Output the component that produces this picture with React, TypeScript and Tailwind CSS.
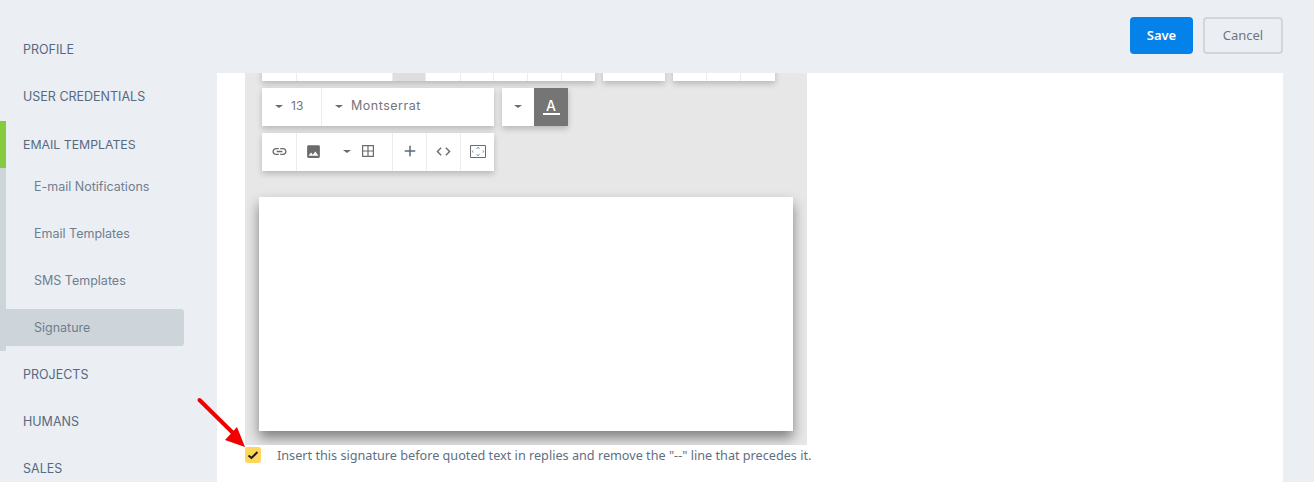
import { MdAdd, MdCode, MdImage, MdLink } from 'react-icons/md';

function Caret() {
  return <span className="inline-block w-0 h-0 border-x-[4px] border-x-transparent border-t-[3px] border-t-[#6b6b6b]" />;
}

function TopLink({ label }: { label: string }) {
  return (
    <div className="h-[47px] flex items-center pl-[23px] pt-[2px] text-[12.5px] text-[#566a7f] font-['Inter',sans-serif]">
      {label}
    </div>
  );
}

function SubLink({ label, active }: { label: string; active?: boolean }) {
  return (
    <div className="h-[47px] flex items-center">
      <div className={`w-[178px] h-[37px] flex items-center pl-[28px] pt-[2px] text-[12.5px] text-[#6e7f90] font-['Inter',sans-serif] rounded-r-[3px] ${active ? 'bg-[#cdd5da]' : ''}`}>
        {label}
      </div>
    </div>
  );
}

function Cell({ w, children, gray, divider = true }: { w: string; children?: React.ReactNode; gray?: boolean; divider?: boolean }) {
  return (
    <div className={`${w} h-full flex items-center justify-center pb-[2px] ${divider ? 'border-r border-[#ebebf0]' : ''} ${gray ? 'bg-[#dedede]' : ''}`}>
      {children}
    </div>
  );
}

function Group({ children }: { children: React.ReactNode }) {
  return <div className="flex h-[38px] bg-white shadow-[0_3px_6px_rgba(0,0,0,0.2)]">{children}</div>;
}

export default function App() {
  return (
    <div className="relative w-[1314px] h-[482px] overflow-hidden bg-[#ebeef3] flex flex-col">
      <header className="h-[73px] shrink-0 flex items-center justify-end pr-[31px] pb-[2px] gap-[10px] font-['Noto_Sans',sans-serif] text-[13px]">
        <button className="w-[63px] h-[37px] rounded-[4px] bg-[#0581ea] text-white font-semibold">Save</button>
        <button className="w-[80px] h-[37px] rounded-[4px] border-2 border-[#d0d6da] text-[#6b7684]">Cancel</button>
      </header>

      <div className="flex flex-1 min-h-0">
        <nav className="w-[217px] shrink-0 -mt-[47px]">
          <TopLink label="PROFILE" />
          <TopLink label="USER CREDENTIALS" />
          <div className="mt-[1px] border-l-[6px] border-l-[#84cb3f] h-[47px] flex items-center pt-[2px]">
            <div className="pl-[17px] text-[12.3px] text-[#566a7f] font-['Inter',sans-serif]">EMAIL TEMPLATES</div>
          </div>
          <div className="flow-root border-l-[6px] border-l-[#cdd5da] h-[183px]">
            <div className="-mt-[5px]">
              <SubLink label="E-mail Notifications" />
              <SubLink label="Email Templates" />
              <SubLink label="SMS Templates" />
              <SubLink label="Signature" active />
            </div>
          </div>
          <TopLink label="PROJECTS" />
          <TopLink label="HUMANS" />
          <TopLink label="SALES" />
        </nav>

        <main className="w-[1066px] bg-white pl-[28px] overflow-hidden">
          <div className="w-[562px] h-[372px] bg-[#e7e7e7] overflow-hidden">
            <div className="-mt-[30px] pl-[17px] flex flex-col gap-[7px]">
              <div className="flex gap-[8px]">
                <Group>
                  <Cell w="w-[35px]" />
                  <Cell w="w-[96px]" />
                  <Cell w="w-[33px]" gray />
                  <Cell w="w-[35px]" />
                  <Cell w="w-[33px]" />
                  <Cell w="w-[34px]" />
                  <Cell w="w-[34px]" />
                  <Cell w="w-[33px]" divider={false} />
                </Group>
                <Group>
                  <Cell w="w-[62px]" divider={false} />
                </Group>
                <Group>
                  <Cell w="w-[34px]" />
                  <Cell w="w-[34px]" />
                  <Cell w="w-[34px]" divider={false} />
                </Group>
              </div>

              <div className="flex gap-[8px]">
                <Group>
                  <div className="w-[60px] h-full flex items-center pl-[13px] pb-[2px] gap-[8px] border-r border-[#ebebf0] text-[12px] text-[#757575] font-['Inter',sans-serif]">
                    <Caret />
                    13
                  </div>
                  <div className="w-[172px] h-full flex items-center pl-[13px] pb-[2px] gap-[8px] text-[12.5px] tracking-[0.5px] text-[#757575] font-['Inter',sans-serif]">
                    <Caret />
                    Montserrat
                  </div>
                </Group>
                <Group>
                  <Cell w="w-[32px]" divider={false}>
                    <Caret />
                  </Cell>
                  <div className="w-[34px] h-full bg-[#757575] flex flex-col items-center justify-center text-white text-[14px] font-medium font-['Inter',sans-serif] leading-[13px]">
                    A
                    <span className="w-[17px] h-[2px] bg-white mt-[1px]" />
                  </div>
                </Group>
              </div>

              <div className="flex">
                <Group>
                  <Cell w="w-[35px]">
                    <MdLink className="w-[17px] h-[17px] text-[#6b6b6b]" />
                  </Cell>
                  <div className="w-[96px] h-full flex items-center pl-[8px] pb-[2px] border-r border-[#ebebf0]">
                    <MdImage className="w-[17px] h-[17px] text-[#6b6b6b]" />
                    <span className="ml-[21px] mr-[11px] flex"><Caret /></span>
                    <svg viewBox="0 0 12 12" className="w-[12px] h-[12px]" fill="none" stroke="#6b6b6b" strokeWidth="1.2">
                      <path d="M.6.6h10.800v10.800H.6zM6 .6v10.800M.6 6h10.800" />
                    </svg>
                  </div>
                  <Cell w="w-[34px]">
                    <MdAdd className="w-[18px] h-[18px] text-[#5b6b7d]" />
                  </Cell>
                  <Cell w="w-[34px]">
                    <MdCode className="w-[17px] h-[17px] text-[#6b6b6b]" />
                  </Cell>
                  <Cell w="w-[33px]" divider={false}>
                    <svg viewBox="0 0 16 13" className="w-[16px] h-[13px]" fill="none" stroke="#6b6b6b" strokeWidth="1">
                      <path d="M.5.5h15v12H.5z" />
                      <path d="M6.500 3.500 8 2.500l1.500 1M6.500 9.500l1.500 1 1.500-1M3 5.500l-.5 1 .5 1M13 5.500l.5 1-.5 1" stroke="#5b7fa8" />
                    </svg>
                  </Cell>
                </Group>
              </div>

              <div className="w-[534px] h-[234px] -ml-[3px] mt-[19px] bg-white shadow-[0_7px_12px_rgba(0,0,0,0.45)]" />
            </div>
          </div>

          <label className="flex items-center mt-[2px] h-[16px] gap-[16px] text-[12.66px] text-[#5f6f82] font-['Noto_Sans',sans-serif]">
            <span className="w-[16px] h-[16px] rounded-[3px] bg-[#ffd65c] flex items-center justify-center">
              <svg viewBox="0 0 12 12" className="w-[12px] h-[12px]" fill="none" stroke="#1c1c1c" strokeWidth="2">
                <path d="M1.500 6.500 4.500 9l6-6" />
              </svg>
            </span>
            <span className="mt-[1px]">Insert this signature before quoted text in replies and remove the "--" line that precedes it.</span>
          </label>
        </main>
      </div>

      {/* red annotation arrow drawn on top of the screenshot */}
      <svg className="absolute left-[190px] top-[390px] w-[70px] h-[70px]" viewBox="0 0 70 70">
        <path d="M9.500 10 42 42" stroke="#f00000" strokeWidth="4" strokeLinecap="round" />
        <path d="M55 57 35 50 47 37z" fill="#f00000" />
      </svg>
    </div>
  );
}
